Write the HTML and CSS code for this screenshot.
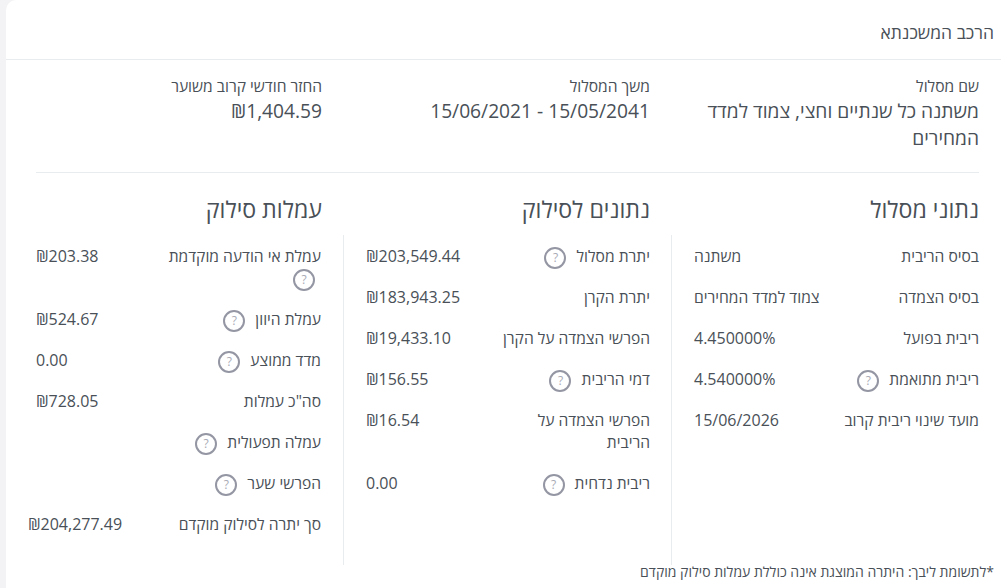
FILE: index.html
```html
<!DOCTYPE html>
<html lang="he" dir="rtl">

<head>
    <meta charset="utf-8">
    <title>הרכב המשכנתא</title>
    <link rel="stylesheet" href="styles.css">
</head>

<body>
    <div class="card">
        <div class="card-title">הרכב המשכנתא</div>

        <div class="summary">
            <div class="summary-item">
                <div class="summary-label">שם מסלול</div>
                <div class="summary-value">משתנה כל שנתיים וחצי, צמוד למדד המחירים</div>
            </div>
            <div class="summary-item">
                <div class="summary-label">משך המסלול</div>
                <div class="summary-value"><bdi>15/06/2021 - 15/05/2041</bdi></div>
            </div>
            <div class="summary-item">
                <div class="summary-label">החזר חודשי קרוב משוער</div>
                <div class="summary-value"><bdi>₪1,404.59</bdi></div>
            </div>
        </div>
        <div class="summary-line"></div>

        <div class="heads">
            <h2>נתוני מסלול</h2>
            <h2>נתונים לסילוק</h2>
            <h2>עמלות סילוק</h2>
        </div>

        <div class="details">
            <div class="col">
                <div class="item"><div class="key">בסיס הריבית</div><div class="val">משתנה</div></div>
                <div class="item"><div class="key">בסיס הצמדה</div><div class="val">צמוד למדד המחירים</div></div>
                <div class="item"><div class="key">ריבית בפועל</div><div class="val"><bdi>4.450000%</bdi></div></div>
                <div class="item"><div class="key">ריבית מתואמת <span class="help">?</span></div><div class="val"><bdi>4.540000%</bdi></div></div>
                <div class="item"><div class="key">מועד שינוי ריבית קרוב</div><div class="val"><bdi>15/06/2026</bdi></div></div>
            </div>
            <div class="col">
                <div class="item"><div class="key">יתרת מסלול <span class="help">?</span></div><div class="val"><bdi>₪203,549.44</bdi></div></div>
                <div class="item"><div class="key">יתרת הקרן</div><div class="val"><bdi>₪183,943.25</bdi></div></div>
                <div class="item"><div class="key">הפרשי הצמדה על הקרן</div><div class="val"><bdi>₪19,433.10</bdi></div></div>
                <div class="item"><div class="key">דמי הריבית <span class="help">?</span></div><div class="val"><bdi>₪156.55</bdi></div></div>
                <div class="item"><div class="key">הפרשי הצמדה על הריבית</div><div class="val"><bdi>₪16.54</bdi></div></div>
                <div class="item"><div class="key">ריבית נדחית <span class="help">?</span></div><div class="val"><bdi>0.00</bdi></div></div>
            </div>
            <div class="col">
                <div class="item"><div class="key">עמלת אי הודעה מוקדמת <span class="help">?</span></div><div class="val"><bdi>₪203.38</bdi></div></div>
                <div class="item"><div class="key">עמלת היוון <span class="help">?</span></div><div class="val"><bdi>₪524.67</bdi></div></div>
                <div class="item"><div class="key">מדד ממוצע <span class="help">?</span></div><div class="val"><bdi>0.00</bdi></div></div>
                <div class="item"><div class="key">סה"כ עמלות</div><div class="val"><bdi>₪728.05</bdi></div></div>
                <div class="item"><div class="key">עמלה תפעולית <span class="help">?</span></div><div class="val"></div></div>
                <div class="item"><div class="key">הפרשי שער <span class="help">?</span></div><div class="val"></div></div>
                <div class="item"><div class="key">סך יתרה לסילוק מוקדם</div><div class="val val-long"><bdi>₪204,277.49</bdi></div></div>
            </div>
        </div>

        <div class="note">*לתשומת ליבך: היתרה המוצגת אינה כוללת עמלות סילוק מוקדם</div>
    </div>
</body>

</html>
```

FILE: styles.css
```css
* {
    padding: 0;
    margin: 0;
    box-sizing: border-box;
}

html,
body {
    height: 100%;
    overflow: hidden;
}

body {
    background-color: #f3f3f5;
    color: #495057;
    font-family: "Open Sans", "Noto Sans", "Liberation Sans", sans-serif;
    font-size: 15.6px;
    line-height: 22px;
}

.card {
    margin-left: 6px;
    height: 100%;
    background-color: #fff;
    border-top-left-radius: 10px;
}

.card-title {
    height: 60px;
    padding: 20px 7px 0 0;
    border-bottom: 1px solid #e9ecef;
    font-size: 17.5px;
    line-height: 24px;
}

.summary,
.heads,
.details {
    display: grid;
    grid-template-columns: 330px 328px 329px;
    padding-left: 8px;
}

.summary {
    height: 112px;
    padding-top: 15px;
}

.summary-item,
.heads h2 {
    padding: 0 21px 0 22px;
}

.summary-item:first-child,
.heads h2:first-child {
    padding-right: 22px;
}

.summary-label {
    font-size: 15.6px;
    line-height: 22px;
}

.summary-value {
    font-size: 19.2px;
    line-height: 27px;
}

.summary-line {
    height: 1px;
    margin: 0 22px 0 30px;
    background-color: #e9ecef;
}

.heads {
    padding-top: 20px;
    height: 62px;
}

.heads h2 {
    font-size: 23.2px;
    line-height: 32px;
    font-weight: 400;
}

.details {
    height: 330px;
}

.col {
    padding: 10px 21px 0 22px;
    border-left: 1px solid #e9ecef;
}

.col:first-child {
    padding-right: 22px;
}

.col:last-child {
    padding-right: 22px;
    border-left: 0;
}

.item {
    display: grid;
    grid-template-columns: 158px 1fr;
    margin-bottom: 19px;
}

.val {
    text-align: left;
    white-space: nowrap;
}

.val bdi {
    font-size: 16px;
}

.val-long {
    margin-left: -8px;
}

.help {
    display: inline-flex;
    align-items: center;
    justify-content: center;
    width: 22px;
    height: 22px;
    margin: -3px 6px -3px 0;
    border: 2px solid #9496a3;
    border-radius: 50%;
    color: #a8aab5;
    font-size: 12px;
    line-height: 1;
    vertical-align: middle;
}

.note {
    padding: 0 7px 0 0;
    font-size: 14px;
    line-height: 14px;
}
```
